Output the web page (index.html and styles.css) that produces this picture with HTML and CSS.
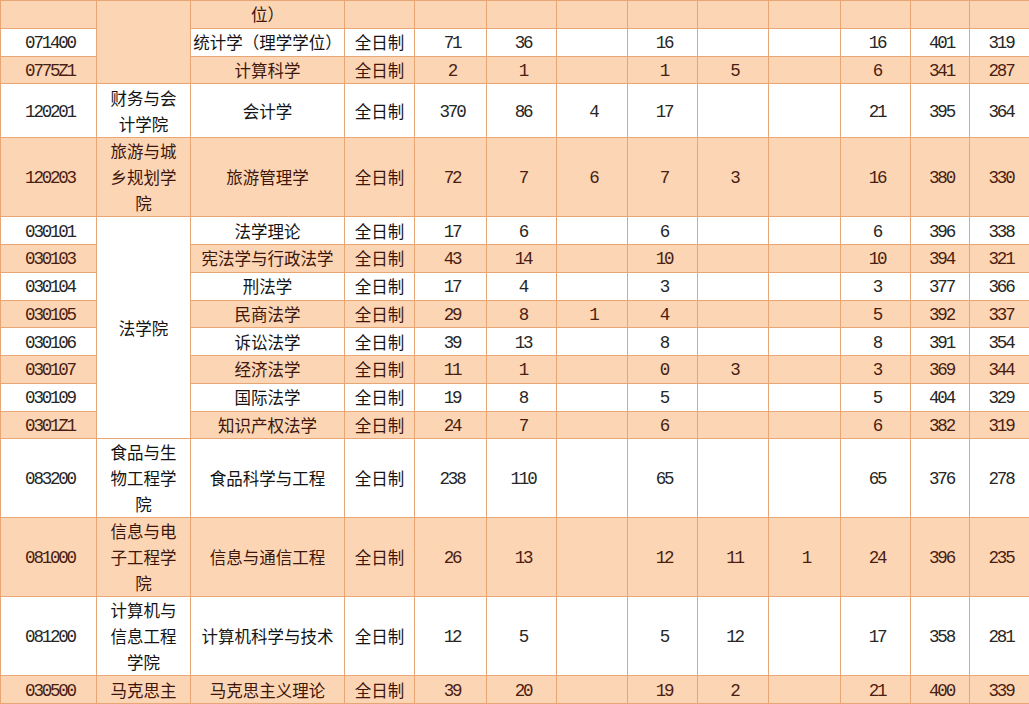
FILE: index.html
```html
<!DOCTYPE html>
<html lang="zh-CN">
<head>
<meta charset="utf-8">
<title>招生录取统计表</title>
<link rel="stylesheet" href="styles.css">
</head>
<body>
<div class="sheet">
<table class="grid">
  <colgroup>
    <col class="w-code"><col class="w-college"><col class="w-major"><col class="w-type">
    <col class="w-72"><col class="w-70"><col class="w-71"><col class="w-70"><col class="w-71">
    <col class="w-72"><col class="w-70"><col class="w-59"><col class="w-60">
  </colgroup>
  <tbody>
    <tr class="pe h1">
      <td class="num"></td><td class="college" rowspan="3"></td><td>位）</td><td></td>
      <td class="num"></td><td class="num"></td><td class="num"></td><td class="num"></td><td class="num"></td><td class="num"></td><td class="num"></td><td class="num"></td><td class="num"></td>
    </tr>
    <tr class="wh h1">
      <td class="num">071400</td><td>统计学（理学学位）</td><td>全日制</td>
      <td class="num">71</td><td class="num">36</td><td class="num"></td><td class="num">16</td><td class="num"></td><td class="num"></td><td class="num">16</td><td class="num">401</td><td class="num">319</td>
    </tr>
    <tr class="pe h1">
      <td class="num">0775Z1</td><td>计算科学</td><td>全日制</td>
      <td class="num">2</td><td class="num">1</td><td class="num"></td><td class="num">1</td><td class="num">5</td><td class="num"></td><td class="num">6</td><td class="num">341</td><td class="num">287</td>
    </tr>
    <tr class="wh h2">
      <td class="num">120201</td><td class="college">财务与会计学院</td><td>会计学</td><td>全日制</td>
      <td class="num">370</td><td class="num">86</td><td class="num">4</td><td class="num">17</td><td class="num"></td><td class="num"></td><td class="num">21</td><td class="num">395</td><td class="num">364</td>
    </tr>
    <tr class="pe h3">
      <td class="num">120203</td><td class="college">旅游与城乡规划学院</td><td>旅游管理学</td><td>全日制</td>
      <td class="num">72</td><td class="num">7</td><td class="num">6</td><td class="num">7</td><td class="num">3</td><td class="num"></td><td class="num">16</td><td class="num">380</td><td class="num">330</td>
    </tr>
    <tr class="wh h1">
      <td class="num">030101</td><td class="college" rowspan="8">法学院</td><td>法学理论</td><td>全日制</td>
      <td class="num">17</td><td class="num">6</td><td class="num"></td><td class="num">6</td><td class="num"></td><td class="num"></td><td class="num">6</td><td class="num">396</td><td class="num">338</td>
    </tr>
    <tr class="pe h1">
      <td class="num">030103</td><td>宪法学与行政法学</td><td>全日制</td>
      <td class="num">43</td><td class="num">14</td><td class="num"></td><td class="num">10</td><td class="num"></td><td class="num"></td><td class="num">10</td><td class="num">394</td><td class="num">321</td>
    </tr>
    <tr class="wh h1">
      <td class="num">030104</td><td>刑法学</td><td>全日制</td>
      <td class="num">17</td><td class="num">4</td><td class="num"></td><td class="num">3</td><td class="num"></td><td class="num"></td><td class="num">3</td><td class="num">377</td><td class="num">366</td>
    </tr>
    <tr class="pe h1">
      <td class="num">030105</td><td>民商法学</td><td>全日制</td>
      <td class="num">29</td><td class="num">8</td><td class="num">1</td><td class="num">4</td><td class="num"></td><td class="num"></td><td class="num">5</td><td class="num">392</td><td class="num">337</td>
    </tr>
    <tr class="wh h1">
      <td class="num">030106</td><td>诉讼法学</td><td>全日制</td>
      <td class="num">39</td><td class="num">13</td><td class="num"></td><td class="num">8</td><td class="num"></td><td class="num"></td><td class="num">8</td><td class="num">391</td><td class="num">354</td>
    </tr>
    <tr class="pe h1">
      <td class="num">030107</td><td>经济法学</td><td>全日制</td>
      <td class="num">11</td><td class="num">1</td><td class="num"></td><td class="num">0</td><td class="num">3</td><td class="num"></td><td class="num">3</td><td class="num">369</td><td class="num">344</td>
    </tr>
    <tr class="wh h1">
      <td class="num">030109</td><td>国际法学</td><td>全日制</td>
      <td class="num">19</td><td class="num">8</td><td class="num"></td><td class="num">5</td><td class="num"></td><td class="num"></td><td class="num">5</td><td class="num">404</td><td class="num">329</td>
    </tr>
    <tr class="pe h1">
      <td class="num">0301Z1</td><td>知识产权法学</td><td>全日制</td>
      <td class="num">24</td><td class="num">7</td><td class="num"></td><td class="num">6</td><td class="num"></td><td class="num"></td><td class="num">6</td><td class="num">382</td><td class="num">319</td>
    </tr>
    <tr class="wh h3">
      <td class="num">083200</td><td class="college">食品与生物工程学院</td><td>食品科学与工程</td><td>全日制</td>
      <td class="num">238</td><td class="num">110</td><td class="num"></td><td class="num">65</td><td class="num"></td><td class="num"></td><td class="num">65</td><td class="num">376</td><td class="num">278</td>
    </tr>
    <tr class="pe h3">
      <td class="num">081000</td><td class="college">信息与电子工程学院</td><td>信息与通信工程</td><td>全日制</td>
      <td class="num">26</td><td class="num">13</td><td class="num"></td><td class="num">12</td><td class="num">11</td><td class="num">1</td><td class="num">24</td><td class="num">396</td><td class="num">235</td>
    </tr>
    <tr class="wh h3">
      <td class="num">081200</td><td class="college">计算机与信息工程学院</td><td>计算机科学与技术</td><td>全日制</td>
      <td class="num">12</td><td class="num">5</td><td class="num"></td><td class="num">5</td><td class="num">12</td><td class="num"></td><td class="num">17</td><td class="num">358</td><td class="num">281</td>
    </tr>
    <tr class="pe h1">
      <td class="num">030500</td><td class="college">马克思主</td><td>马克思主义理论</td><td>全日制</td>
      <td class="num">39</td><td class="num">20</td><td class="num"></td><td class="num">19</td><td class="num">2</td><td class="num"></td><td class="num">21</td><td class="num">400</td><td class="num">339</td>
    </tr>
  </tbody>
</table>
</div>
</body>
</html>
```

FILE: styles.css
```css
html, body {
  margin: 0;
  padding: 0;
  background: #ffffff;
}

.sheet {
  width: 1029px;
  height: 704px;
  overflow: hidden;
}

.grid {
  border-collapse: collapse;
  table-layout: fixed;
  width: 1029px;
  font-family: "Noto Sans CJK SC", "Noto Sans", sans-serif;
  font-size: 16.5px;
  color: #161616;
}

.w-code { width: 96px; }
.w-college { width: 94px; }
.w-major { width: 154px; }
.w-type { width: 70px; }
.w-72 { width: 72px; }
.w-70 { width: 70px; }
.w-71 { width: 71px; }
.w-59 { width: 59px; }
.w-60 { width: 60px; }

.grid td {
  border: 1px solid #e7a673;
  padding: 0 1px;
  text-align: center;
  vertical-align: middle;
  line-height: 26px;
  white-space: nowrap;
  overflow: hidden;
}

.grid td.college {
  white-space: normal;
  padding: 0 12px;
}

.grid td.num {
  font-family: "Liberation Mono", "DejaVu Sans Mono", monospace;
  font-size: 17.5px;
  letter-spacing: -2.2px;
  line-height: 24px;
  padding: 2px 1px 0 4px;
}

.wh td {
  background: #ffffff;
  color: #141414;
}

.wh td.num {
  color: #262626;
}

.pe td {
  background: #fcd5b4;
  color: #3d160c;
}

.pe td.num {
  color: #4a1d12;
}

.h1 { height: 27.75px; }
.h2 { height: 54px; }
.h3 { height: 79px; }
```
